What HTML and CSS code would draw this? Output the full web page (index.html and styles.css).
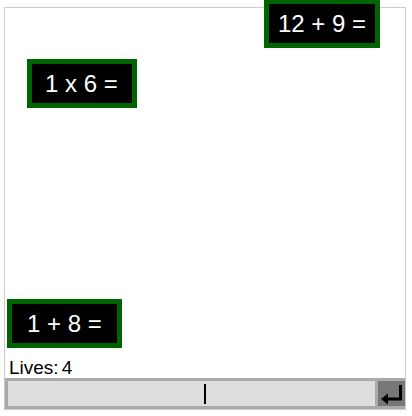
FILE: index.html
```html
<!DOCTYPE html>
<html>
<head>
<meta charset="utf-8">
<link rel="stylesheet" href="styles.css">
</head>
<body>
<div class="frame">
  <div class="stage">
    <div class="problem p-wide" style="left:259px;top:-9px">12 + 9 =</div>
    <div class="problem p-mid" style="left:22px;top:51px">1 x 6 =</div>
    <div class="problem p-narrow" style="left:2px;top:291px">1 + 8 =</div>
  </div>
  <div class="lives"><span>Lives:</span><span class="count">4</span></div>
  <div class="bar">
    <div class="field"><span class="caret"></span></div>
    <div class="enter">
      <svg width="27" height="25" viewBox="0 0 27 25">
        <path d="M22.5 4 V18 H9" fill="none" stroke="#000" stroke-width="3"/>
        <path d="M3 18 L10 12.5 L10 23.5 Z" fill="#000"/>
      </svg>
    </div>
  </div>
</div>
</body>
</html>
```
FILE: styles.css
```css
html, body {
  margin: 0;
  padding: 0;
  background: #fff;
}
body {
  font-family: "Liberation Sans", Arial, sans-serif;
}
.frame {
  margin: 7px 0 0 4px;
  width: 400px;
  border: 1px solid #ccc;
}
.stage {
  position: relative;
  height: 349px;
}
.problem {
  position: absolute;
  background: #000;
  color: #fff;
  border: 5px solid #006400;
  font-size: 24px;
  line-height: 27px;
  padding: 6px 0;
  white-space: nowrap;
}
.p-wide { padding-left: 9px; padding-right: 9px; }
.p-mid { padding-left: 13px; padding-right: 14px; }
.p-narrow { padding-left: 15px; padding-right: 15px; }
.lives {
  font-size: 19px;
  line-height: 21px;
  padding-left: 4px;
  color: #000;
}
.lives .count {
  margin-left: 3px;
}
.bar {
  display: flex;
  height: 31px;
}
.field {
  flex: 1;
  background: #ddd;
  border: 3px solid #aaa;
  display: flex;
  justify-content: center;
  align-items: center;
}
.caret {
  width: 2px;
  height: 20px;
  background: #000;
  margin-left: 26px;
}
.enter {
  width: 27px;
  background: #777;
  border-top: 3px solid #aaa;
  border-bottom: 3px solid #aaa;
  display: flex;
}
.enter svg {
  display: block;
}
```
